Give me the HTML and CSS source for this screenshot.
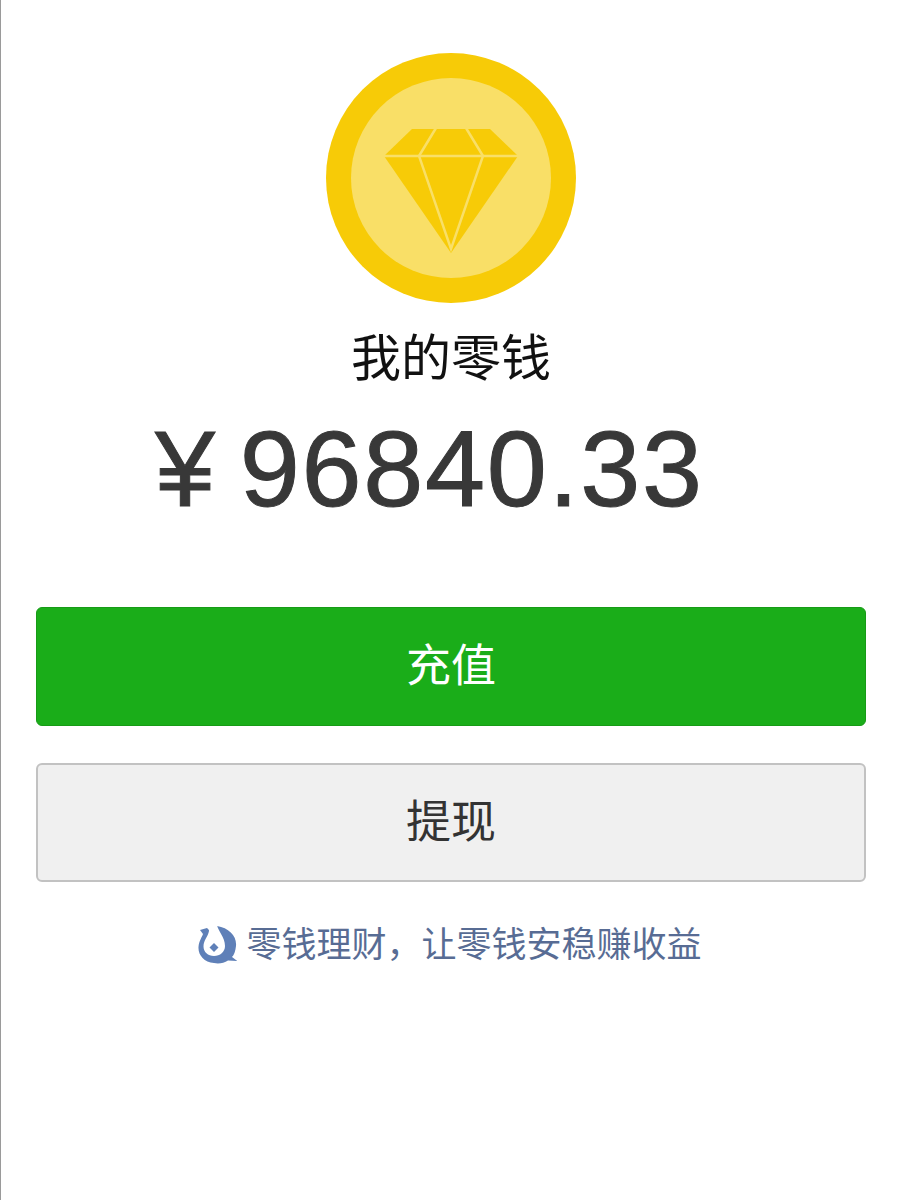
FILE: index.html
```html
<!DOCTYPE html>
<html lang="zh-CN">
<head>
    <meta charset="UTF-8">
    <meta name="viewport" content="width=device-width, initial-scale=1.0">
    <title>我的零钱</title>
    <link rel="stylesheet" href="styles.css">
</head>
<body>
    <div class="container">
        <svg class="coin" viewBox="0 0 250 250" width="250" height="250">
            <circle cx="125" cy="125" r="125" fill="#f7cb07"/>
            <circle cx="125" cy="125" r="100" fill="#f9df67"/>
            <polygon points="86,76 164,76 192,103 125,200 58,103" fill="#f7cb07"/>
            <g fill="none" stroke="#f9df67" stroke-width="2.5">
                <path d="M56 103H194"/>
                <path d="M110 75L93 103L125 196L157 103L140 75"/>
            </g>
        </svg>
        <h1 class="title">我的零钱</h1>
        <p class="amount"><span class="currency">¥</span>96840.33</p>
        <a class="btn btn-primary">充值</a>
        <a class="btn btn-default">提现</a>
        <a class="finance-link">
            <svg class="finance-icon" viewBox="0 0 40 40" width="40" height="40">
                <path d="M20 1C32 3 40 11 39 21C38.500 26 37 30 35 32L40.500 36L31 35.500C27 38 22 39 17 38C7 37 1 30 1.500 22C2 16 5 12 6 9L3 5L10 3L12 5L15 3Z" fill="#5f80b8"/>
                <path d="M11.500 0L20 0C21 6 28 12 28 21C28 27 23 31 17 31C11 31 6.500 27 6.500 21.500C6.500 15 11 12 12 6Z" fill="#fff"/>
                <path d="M17 18L21.500 22.500L17 27L12.500 22.500Z" fill="#5f80b8"/>
            </svg>
            <span>零钱理财，让零钱安稳赚收益</span>
        </a>
    </div>
</body>
</html>
```

FILE: styles.css
```css
html {
    background-color: #fff;
}
body {
    font-family: "Liberation Sans", "Noto Sans CJK SC", Arial, sans-serif;
    margin: 0;
    min-height: 1200px;
    background-color: #fff;
    border-left: 1px solid #9a9a9a;
    box-sizing: border-box;
}
.container {
    display: flex;
    flex-direction: column;
    align-items: center;
    padding: 53px 35px 0 35px;
}
.coin {
    display: block;
}
.title {
    margin: 26px 0 0;
    font-size: 50px;
    line-height: 60px;
    font-weight: 400;
    color: #111;
}
.amount {
    align-self: flex-start;
    margin: 18px 0 0 119px;
    font-size: 108px;
    line-height: 124px;
    letter-spacing: 1.7px;
    color: #383838;
    -webkit-text-stroke: 1px #383838;
}
.currency {
    margin-right: 23px;
}
.btn {
    display: block;
    box-sizing: border-box;
    width: 100%;
    height: 119px;
    border-radius: 6px;
    text-align: center;
    font-size: 45px;
    line-height: 117px;
}
.btn-primary {
    margin-top: 76px;
    background-color: #1aad19;
    border: 1px solid #179b16;
    color: #fff;
}
.btn-default {
    margin-top: 37px;
    background-color: #f0f0f0;
    border: 2px solid #c2c2c2;
    line-height: 115px;
    color: #333;
}
.finance-link {
    display: flex;
    align-items: center;
    gap: 9px;
    margin: 42px 3px 0 0;
    font-size: 35px;
    line-height: 42px;
    color: #586c94;
}
.finance-icon {
    display: block;
}
```
